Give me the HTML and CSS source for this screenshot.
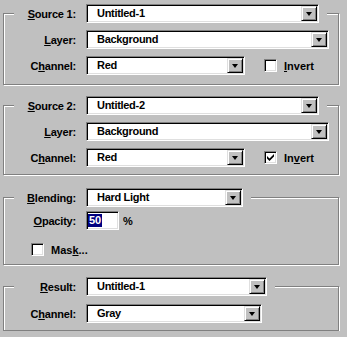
FILE: index.html
```html
<!DOCTYPE html>
<html lang="en">
<head>
  <meta charset="UTF-8" />
  <title>Calculations</title>
  <link rel="stylesheet" href="styles.css">
</head>
<body>
  <div class="dialog">
    <fieldset class="group">
      <legend>
        <div class="row">
          <span class="lbl"><u>S</u>ource 1:</span>
          <div class="combo w-src"><span class="val">Untitled-1</span><b class="drop"></b></div>
        </div>
      </legend>
      <div class="rows">
        <div class="row">
          <span class="lbl"><u>L</u>ayer:</span>
          <div class="combo w-layer"><span class="val">Background</span><b class="drop"></b></div>
        </div>
        <div class="row">
          <span class="lbl">C<u>h</u>annel:</span>
          <div class="combo w-chan"><span class="val">Red</span><b class="drop"></b></div>
          <div class="opt invert"><span class="check"></span><span><u>I</u>nvert</span></div>
        </div>
      </div>
    </fieldset>

    <fieldset class="group second">
      <legend>
        <div class="row">
          <span class="lbl"><u>S</u>ource 2:</span>
          <div class="combo w-src"><span class="val">Untitled-2</span><b class="drop"></b></div>
        </div>
      </legend>
      <div class="rows">
        <div class="row">
          <span class="lbl"><u>L</u>ayer:</span>
          <div class="combo w-layer"><span class="val">Background</span><b class="drop"></b></div>
        </div>
        <div class="row">
          <span class="lbl">C<u>h</u>annel:</span>
          <div class="combo w-chan"><span class="val">Red</span><b class="drop"></b></div>
          <div class="opt invert">
            <span class="check">
              <svg width="7" height="7" viewBox="0 0 7 7"><path d="M0 2L2.5 4.5L7 0V2.5L2.5 7L0 4.5Z" fill="#000"/></svg>
            </span>
            <span>In<u>v</u>ert</span>
          </div>
        </div>
      </div>
    </fieldset>

    <fieldset class="group blend">
      <legend>
        <div class="row">
          <span class="lbl"><u>B</u>lending:</span>
          <div class="combo w-blend"><span class="val">Hard Light</span><b class="drop"></b></div>
        </div>
      </legend>
      <div class="rows">
        <div class="row">
          <span class="lbl"><u>O</u>pacity:</span>
          <div class="edit"><span class="sel">50</span></div>
          <span class="unit">%</span>
        </div>
        <div class="row">
          <div class="opt mask"><span class="check"></span><span>Mas<u>k</u>...</span></div>
        </div>
      </div>
    </fieldset>

    <fieldset class="group result">
      <legend>
        <div class="row">
          <span class="lbl"><u>R</u>esult:</span>
          <div class="combo w-result"><span class="val">Untitled-1</span><b class="drop"></b></div>
        </div>
      </legend>
      <div class="rows">
        <div class="row">
          <span class="lbl">C<u>h</u>annel:</span>
          <div class="combo w-gray"><span class="val">Gray</span><b class="drop"></b></div>
        </div>
      </div>
    </fieldset>
  </div>
</body>
</html>
```

FILE: styles.css
```css
html, body {
  margin: 0;
  padding: 0;
  background: #c0c0c0;
}
body {
  font-family: "Liberation Sans", Arial, sans-serif;
  font-size: 11px;
  font-weight: bold;
  color: #000;
}
.dialog {
  padding: 4px 8px 0 3px;
}
.group {
  margin: 0;
  padding: 7px 0 9px;
  border: 1px solid #808080;
  box-shadow: inset 1px 1px 0 #fff, 1px 1px 0 #fff;
  min-inline-size: 0;
}
.group + .group {
  margin-top: 9px;
}
.group.second {
  margin-top: 11px;
  padding-bottom: 7px;
}
.group.blend {
  margin-top: 13px;
  padding: 4px 0 5px;
}
.group.result {
  margin-top: 12px;
  padding: 8px 0 7px;
}
.group .rows {
  padding-left: 10px;
  display: flex;
  flex-direction: column;
  gap: 7px;
}
.group.blend .rows {
  gap: 10px;
}
legend {
  margin-left: 10px;
  padding: 0 8px 0 0;
  background: #c0c0c0;
}
.row {
  display: flex;
  align-items: center;
  height: 19px;
}
.lbl {
  width: 62px;
  margin-right: 10px;
  text-align: right;
  white-space: nowrap;
  letter-spacing: -0.2px;
}
.combo {
  box-sizing: border-box;
  height: 19px;
  display: flex;
  align-items: center;
  padding: 1px;
  background: #fff;
  border: 1px solid;
  border-color: #808080 #fff #fff #808080;
  box-shadow: inset 1px 1px 0 #000, inset -1px -1px 0 #dfdfdf;
}
.combo .val {
  flex: 1;
  padding-left: 9px;
  line-height: 15px;
  letter-spacing: -0.3px;
  white-space: nowrap;
}
.drop {
  box-sizing: border-box;
  width: 16px;
  height: 15px;
  display: flex;
  align-items: center;
  justify-content: center;
  background: #c0c0c0;
  border: 1px solid;
  border-color: #dfdfdf #000 #000 #dfdfdf;
  box-shadow: inset 1px 1px 0 #fff, inset -1px -1px 0 #808080;
}
.drop::after {
  content: "";
  border-left: 3px solid transparent;
  border-right: 3px solid transparent;
  border-top: 4px solid #000;
  margin-top: 1px;
}
.w-src { width: 233px; }
.w-layer { width: 243px; }
.w-chan { width: 159px; }
.w-blend { width: 157px; }
.w-result { width: 181px; }
.w-gray { width: 176px; }
.opt {
  display: flex;
  align-items: center;
  gap: 7px;
}
.invert {
  margin-left: 19px;
}
.mask {
  margin-left: 17px;
}
.check {
  box-sizing: border-box;
  width: 13px;
  height: 13px;
  display: flex;
  align-items: center;
  justify-content: center;
  background: #fff;
  border: 1px solid;
  border-color: #808080 #fff #fff #808080;
  box-shadow: inset 1px 1px 0 #000, inset -1px -1px 0 #dfdfdf;
}
.edit {
  box-sizing: border-box;
  width: 33px;
  height: 19px;
  padding: 2px 1px;
  background: #fff;
  border: 1px solid;
  border-color: #808080 #fff #fff #808080;
  box-shadow: inset 1px 1px 0 #000, inset -1px -1px 0 #dfdfdf;
  line-height: 13px;
}
.sel {
  display: inline-block;
  padding: 0 1px;
  background: #000080;
  color: #fff;
}
.unit {
  margin-left: 4px;
}
```
